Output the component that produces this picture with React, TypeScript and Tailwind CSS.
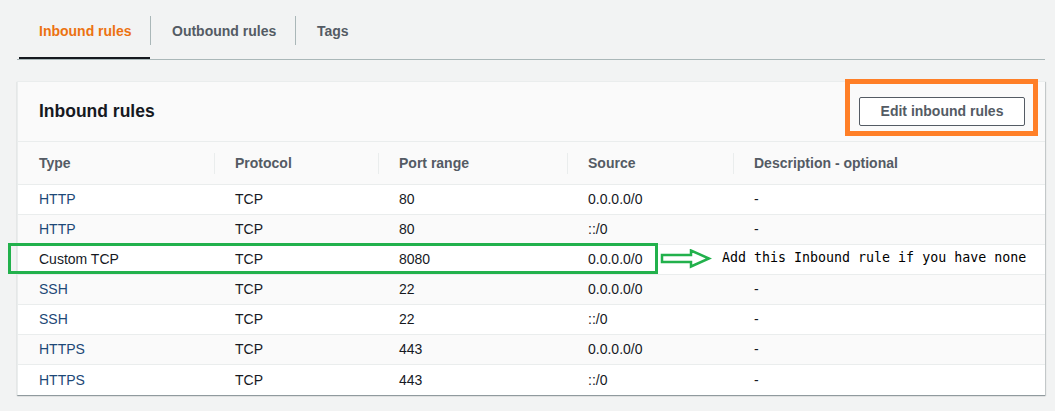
import React from "react";

const rows: { type: string; blue: boolean; proto: string; port: string; source: string; desc: string }[] = [
  { type: "HTTP", blue: true, proto: "TCP", port: "80", source: "0.0.0.0/0", desc: "-" },
  { type: "HTTP", blue: true, proto: "TCP", port: "80", source: "::/0", desc: "-" },
  { type: "Custom TCP", blue: false, proto: "TCP", port: "8080", source: "0.0.0.0/0", desc: "" },
  { type: "SSH", blue: true, proto: "TCP", port: "22", source: "0.0.0.0/0", desc: "-" },
  { type: "SSH", blue: true, proto: "TCP", port: "22", source: "::/0", desc: "-" },
  { type: "HTTPS", blue: true, proto: "TCP", port: "443", source: "0.0.0.0/0", desc: "-" },
  { type: "HTTPS", blue: true, proto: "TCP", port: "443", source: "::/0", desc: "-" },
];

const cols = "grid grid-cols-[196px_164px_189px_166px_1fr]";

export default function App() {
  return (
    <div
      className="relative w-[1055px] h-[411px] overflow-hidden bg-[#f2f3f3] text-[14px] text-[#16191f]"
      style={{ fontFamily: '"Liberation Sans", Arial, sans-serif' }}
    >
      {/* Tabs */}
      <div className="ml-[17px] w-[1028px] h-[60px] border-b border-[#aab7b8] flex items-stretch">
        <div className="relative ml-[2px] w-[131px] pl-[20px] pt-[3px] flex items-center font-bold text-[#ec7211]">
          Inbound rules
          <div className="absolute left-0 right-0 bottom-0 h-[2px] bg-[#16191f]" />
        </div>
        <div className="self-center mt-[1px] w-px h-[29px] bg-[#aab7b8]" />
        <div className="w-[144px] pl-[21px] pt-[3px] flex items-center font-bold text-[#545b64]">Outbound rules</div>
        <div className="self-center mt-[1px] w-px h-[29px] bg-[#aab7b8]" />
        <div className="pl-[21px] pt-[3px] flex items-center font-bold text-[#545b64]">Tags</div>
      </div>

      {/* Card */}
      <div className="ml-[17px] mt-[21px] w-[1028px] bg-white border-l border-t border-[#eaeded] shadow-[0_1px_1px_0_rgba(0,28,36,0.3),1px_1px_1px_0_rgba(0,28,36,0.15)]">
        <div className="h-[60px] bg-[#fafafa] border-b border-[#eaeded] flex items-center justify-between pl-[21px] pr-[20px]">
          <div className="text-[17.5px] font-bold text-[#16191f]">Inbound rules</div>
          <button className="w-[166px] h-[29px] bg-white border border-[#545b64] rounded-[2px] font-bold text-[#545b64] text-[14px] flex items-center justify-center">
            Edit inbound rules
          </button>
        </div>
        <div className={`${cols} h-[43px] bg-[#fafafa] border-b border-[#eaeded] font-bold text-[#545b64]`}>
          {["Type", "Protocol", "Port range", "Source", "Description - optional"].map((h, i) => (
            <div key={h} className="flex items-center">
              {i > 0 && <div className="w-px h-[21px] bg-[#eaeded]" />}
              <span className={i > 0 ? "pl-[20px]" : "pl-[21px]"}>{h}</span>
            </div>
          ))}
        </div>
        {rows.map((r, idx) => (
          <div
            key={idx}
            className={`${cols} h-[30px] ${idx < rows.length - 1 ? "border-b border-[#eaeded]" : ""} ${idx % 2 === 1 ? "bg-[#fafafa]" : "bg-white"}`}
          >
            <div className={`pl-[21px] flex items-center ${r.blue ? "text-[#1d4877]" : ""}`}>{r.type}</div>
            <div className="pl-[21px] flex items-center">{r.proto}</div>
            <div className="pl-[21px] flex items-center">{r.port}</div>
            <div className="pl-[21px] flex items-center">{r.source}</div>
            <div className="pl-[21px] flex items-center">{r.desc}</div>
          </div>
        ))}
      </div>

      {/* Annotations */}
      <div className="absolute left-[845px] top-[79px] w-[193px] h-[57px] border-[5px] border-[#ff7f27]" />
      <div className="absolute left-[8px] top-[243px] w-[650px] h-[31px] border-[3px] border-[#22b14c]" />
      <svg className="absolute left-[660px] top-[249px]" width="52" height="20" viewBox="0 0 52 20">
        <path d="M2,6 L31,6 L31,1.5 L49,9.5 L31,17.5 L31,13 L2,13 Z" fill="none" stroke="#22b14c" strokeWidth="2.5" strokeLinejoin="miter" />
      </svg>
      <div
        className="absolute left-[722px] top-[249px] leading-[18px] text-[13.3px] text-black whitespace-pre"
        style={{ fontFamily: '"DejaVu Sans Mono", "Liberation Mono", monospace' }}
      >
        Add this Inbound rule if you have none
      </div>
    </div>
  );
}
